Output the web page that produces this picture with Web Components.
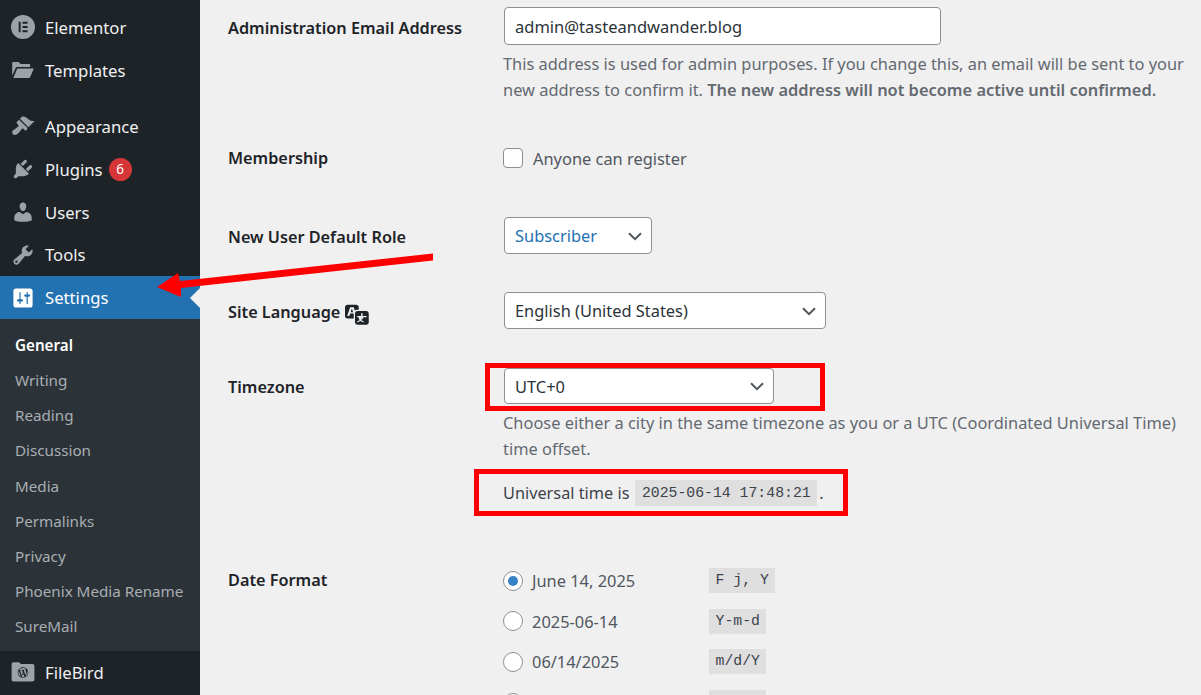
<!DOCTYPE html>
<html lang="en"><head><meta charset="utf-8"><title>General Settings</title>
<style>
html,body{margin:0;height:695px;overflow:hidden;background:#f0f0f1}
body{font-family:"Noto Sans","Liberation Sans",sans-serif;color:#1d2327}
wp-row.r2{margin-top:42px}
wp-row.r3{margin-top:46px}
wp-row.r4{margin-top:38px}
wp-row.r5{margin-top:39px}
wp-row.r6{margin-top:62px}
wp-sep{height:13.500px}
.strong{font-weight:600}
</style></head>
<body>
<wp-shell>
  <wp-sidebar slot="side">
    <wp-item icon="elementor">Elementor</wp-item>
    <wp-item icon="folder">Templates</wp-item>
    <wp-sep></wp-sep>
    <wp-item icon="appearance">Appearance</wp-item>
    <wp-item icon="plugins" badge="6">Plugins</wp-item>
    <wp-item icon="users">Users</wp-item>
    <wp-item icon="tools">Tools</wp-item>
    <wp-item icon="settings" current>Settings</wp-item>
    <wp-submenu>
      <wp-subitem current>General</wp-subitem>
      <wp-subitem>Writing</wp-subitem>
      <wp-subitem>Reading</wp-subitem>
      <wp-subitem>Discussion</wp-subitem>
      <wp-subitem>Media</wp-subitem>
      <wp-subitem>Permalinks</wp-subitem>
      <wp-subitem>Privacy</wp-subitem>
      <wp-subitem>Phoenix Media Rename</wp-subitem>
      <wp-subitem>SureMail</wp-subitem>
    </wp-submenu>
    <wp-item icon="filebird">FileBird</wp-item>
  </wp-sidebar>

  <wp-row label="Administration Email Address" lh="41">
    <wp-input>admin@tasteandwander.blog</wp-input>
    <wp-help>This address is used for admin purposes. If you change this, an email will be sent to your<br>new address to confirm it. <span class="strong">The new address will not become active until confirmed.</span></wp-help>
  </wp-row>
  <wp-row class="r2" label="Membership" lh="25">
    <wp-check>Anyone can register</wp-check>
  </wp-row>
  <wp-row class="r3" label="New User Default Role" lh="40">
    <wp-select w="148" h="37" color="#2271b1">Subscriber</wp-select>
  </wp-row>
  <wp-row class="r4" label="Site Language" lh="40" translate-icon>
    <wp-select w="322" h="37">English (United States)</wp-select>
  </wp-row>
  <wp-row class="r5" label="Timezone" lh="38">
    <wp-select w="270" h="36">UTC+0</wp-select>
    <wp-help>Choose either a city in the same timezone as you or a UTC (Coordinated Universal Time)<br>time offset.</wp-help>
    <wp-time>2025-06-14 17:48:21</wp-time>
  </wp-row>
  <wp-row class="r6" label="Date Format" lh="24">
    <wp-radio checked format="F j, Y">June 14, 2025</wp-radio>
    <wp-radio format="Y-m-d">2025-06-14</wp-radio>
    <wp-radio format="m/d/Y">06/14/2025</wp-radio>
    <wp-radio format=""></wp-radio>
  </wp-row>
  <wp-annotations slot="over"></wp-annotations>
</wp-shell>

<script>
const ICONS={
elementor:'<path fill-rule="evenodd" d="M10 0a10 10 0 1 0 0 20 10 10 0 0 0 0-20zM6.400 5.600h1.600v8.800H6.400zm3.200 0h4.200v1.600H9.600zm0 3.600h4.200v1.600H9.600zm0 3.600h4.200v1.600H9.600z"/>',
folder:'<path d="M1 4.400c0-.6.4-1 1-1h4.400l1.600 1.700h7c.6 0 1 .4 1 1v1.300H5.200c-.6 0-1 .3-1.200.8L1 14.800z"/><path d="M5.200 8.800h13.900L15.900 16c-.2.400-.5.600-.9.600H1.900z"/>',
appearance:'<path d="M14.480 11.060L7.410 3.990l1.500-1.500c.5-.56 2.300-.47 3.510.32 1.210.8 1.430 1.280 2.910 2.100 1.180.64 2.450 1.260 4.450.85zm-.71.71L6.700 4.700 4.930 6.470c-.39.39-.39 1.020 0 1.410l1.060 1.060c.39.39.39 1.030 0 1.420-.6.6-1.430 1.110-2.210 1.690-.35.26-.7.53-1.010.84C1.430 13.230 1 14.230 1 15.400c0 .53.2 1.030.58 1.410l.01.010c.38.38.88.58 1.410.58 1.170 0 2.170-.43 3.510-1.770.31-.31.58-.66.84-1.010.58-.78 1.090-1.610 1.690-2.210.39-.39 1.030-.39 1.420 0l1.060 1.060c.39.39 1.020.39 1.410 0z"/>',
plugins:'<path d="M13.110 4.360L9.870 7.600 8 5.730l3.240-3.240c.35-.34 1.050-.2 1.560.32.52.51.66 1.210.31 1.550zm-8 1.770l.91-1.120 9.010 9.010-1.190.84c-.71.71-2.630 1.160-3.820 1.160H6.140L4.900 17.260c-.59.59-1.540.59-2.120 0-.59-.58-.59-1.530 0-2.120l1.240-1.240v-3.880c0-1.130.4-3.190 1.090-3.890zm7.260 3.970l3.240-3.240c.34-.35 1.040-.21 1.550.31.52.51.66 1.210.31 1.550l-3.240 3.250z"/>',
users:'<path d="M10 9.250c-2.270 0-2.730-3.440-2.730-3.440C7 4.020 7.820 2 9.970 2c2.160 0 2.980 2.020 2.710 3.810 0 0-.41 3.440-2.680 3.440zm0 2.570L12.720 10c2.390 0 4.520 2.330 4.520 4.530v2.490s-3.650 1.130-7.240 1.130c-3.650 0-7.240-1.130-7.240-1.130v-2.490c0-2.250 1.940-4.480 4.470-4.480z"/>',
tools:'<path d="M16.680 9.770c-1.340 1.340-3.300 1.670-4.950.99l-5.410 6.520c-.99.99-2.590.99-3.580 0s-.99-2.590 0-3.570l6.520-5.420c-.68-1.650-.35-3.610.99-4.950 1.280-1.280 3.120-1.620 4.720-1.060l-2.890 2.890 2.820 2.820 2.860-2.870c.53 1.580.18 3.390-1.080 4.650zM3.810 16.210c.4.39 1.040.39 1.430 0 .4-.4.4-1.040 0-1.430-.39-.4-1.030-.4-1.430 0-.39.39-.39 1.030 0 1.430z"/>',
settings:'<path d="M18 16V4c0-1.100-.9-2-2-2H4c-1.100 0-2 .9-2 2v12c0 1.100.9 2 2 2h12c1.100 0 2-.9 2-2zM8 11h1c.55 0 1 .45 1 1s-.45 1-1 1H8v1.500c0 .28-.22.5-.5.5s-.5-.22-.5-.5V13H6c-.55 0-1-.45-1-1s.45-1 1-1h1V5.500c0-.28.22-.5.5-.5s.5.22.5.5V11zm5-2h-1c-.55 0-1-.45-1-1s.45-1 1-1h1V5.500c0-.28.22-.5.5-.5s.5.22.5.5V7h1c.55 0 1 .45 1 1s-.45 1-1 1h-1v5.500c0 .28-.22.5-.5.5s-.5-.22-.5-.5V9z"/>',
filebird:'<path d="M.5 3.500c0-1 .6-1.600 1.600-1.600h4.600l1.600 1.500h9.600c1 0 1.600.6 1.600 1.600v11.300c0 1-.6 1.600-1.600 1.600H2.100c-1 0-1.600-.6-1.600-1.600z"/><g transform="translate(5.600 6.100) scale(.44)" style="fill:#1d2327"><path d="M20 10c0-5.510-4.490-10-10-10C4.480 0 0 4.490 0 10c0 5.520 4.480 10 10 10 5.510 0 10-4.480 10-10zM7.780 15.370L4.370 6.220c.55-.02 1.170-.08 1.170-.08.5-.06.44-1.130-.06-1.110 0 0-1.450.11-2.370.11-.18 0-.37 0-.58-.01C4.120 2.690 6.870 1.110 10 1.110c2.330 0 4.450.87 6.050 2.340-.68-.11-1.650.39-1.650 1.580 0 .74.45 1.360.9 2.100.35.61.55 1.360.55 2.460 0 1.490-1.400 5-1.400 5l-3.030-8.370c.54-.02.82-.17.82-.17.5-.05.44-1.250-.06-1.220 0 0-1.440.12-2.380.12-.87 0-2.330-.12-2.330-.12-.5-.03-.56 1.200-.06 1.220l.92.08 1.260 3.410zM17.410 10c.24-.64.74-1.870.43-4.250.7 1.290 1.050 2.710 1.050 4.250 0 3.290-1.730 6.240-4.400 7.780.97-2.590 1.940-5.200 2.920-7.780zM6.100 18.090C3.120 16.650 1.110 13.530 1.110 10c0-1.300.23-2.480.72-3.590C3.250 10.300 4.670 14.200 6.100 18.090zm4.030-6.630l2.580 6.980c-.86.29-1.760.45-2.710.45-.79 0-1.570-.11-2.290-.33.81-2.380 1.620-4.740 2.420-7.100z"/></g>'
};
const CHEVRON='<svg viewBox="0 0 16 16" width="16" height="16" fill="none" stroke="#50575e" stroke-width="2"><path d="M2 5.200l6 6 6-6"/></svg>';
function def(name,css,html,init){
  customElements.define(name,class extends HTMLElement{
    connectedCallback(){
      if(this.shadowRoot)return;
      const s=this.attachShadow({mode:'open'});
      s.innerHTML='<style>'+css+'</style>'+(typeof html==='function'?html(this):html);
      if(init)init(this,s);
    }
  });
}
def('wp-shell',`:host{display:grid;grid-template-columns:200px 1fr;height:695px;position:relative;overflow:hidden}
 main{padding:7px 0 0 28px;display:flex;flex-direction:column;min-width:0}`,
 `<slot name="side"></slot><main><slot></slot></main><slot name="over"></slot>`);
def('wp-sidebar',`:host{display:flex;flex-direction:column;background:#1d2327;padding-top:6px;height:695px;box-sizing:border-box}`,`<slot></slot>`);
def('wp-sep',`:host{display:block}`,``);
def('wp-item',`:host{display:flex;align-items:center;height:42.800px;flex:none;position:relative;color:#f0f0f1;font-size:16.700px}
 :host([current]){background:#2271b1;color:#fff}
 svg{width:24px;height:24px;margin-left:10.500px;margin-right:10.500px;fill:#9da2a7;flex:none}
 :host([current]) svg{fill:#fff}
 .badge{margin-left:6px;width:23px;height:23px;border-radius:50%;background:#d63638;color:#fff;font-size:13.500px;display:flex;align-items:center;justify-content:center}
 .tip{position:absolute;right:0;top:50%;margin-top:-10px;border:10px solid transparent;border-left:0;border-right-color:#f0f0f1}`,
 h=>`<svg viewBox="0 0 20 20">${ICONS[h.getAttribute('icon')]}</svg><span><slot></slot></span>`+
   (h.hasAttribute('badge')?`<span class="badge">${h.getAttribute('badge')}</span>`:'')+
   (h.hasAttribute('current')?`<span class="tip"></span>`:''));
def('wp-submenu',`:host{display:flex;flex-direction:column;background:#2c3338;padding:8.800px 0 6.200px;flex:none}`,`<slot></slot>`);
def('wp-subitem',`:host{display:block;padding-left:15px;height:35.200px;line-height:35.200px;color:#a9aeb3;font-size:15.200px;white-space:nowrap}
 :host([current]){color:#fff;font-weight:600}`,`<slot></slot>`);
def('wp-row',`:host{display:grid;grid-template-columns:276px 1fr;flex:none}
 .l{font-size:16.250px;font-weight:600;color:#1d2327;display:flex;align-items:center;gap:4.500px;align-self:start;white-space:nowrap;margin-bottom:-20px}
 .f{display:flex;flex-direction:column;align-items:flex-start;min-width:0}
 svg{width:25px;height:25px;fill:#1d2327;flex:none;margin-top:3px}`,
 h=>`<div class="l" style="height:${h.getAttribute('lh')}px">${h.getAttribute('label')}${h.hasAttribute('translate-icon')?'<svg viewBox="0 0 20 20"><path d="M11 7H9.490c-.63 0-1.250.3-1.590.7L7 5H4.130l-2.390 7h1.690l.74-2H7v4H2c-1.100 0-2-.9-2-2V5c0-1.100.9-2 2-2h7c1.100 0 2 .9 2 2v2zM6.510 9H4.490l1-2.930zM10 8h7c1.100 0 2 .9 2 2v7c0 1.100-.9 2-2 2h-7c-1.100 0-2-.9-2-2v-7c0-1.100.9-2 2-2zm7.250 5v-1.080h-3.170V9.750h-1.160v2.170H9.750V13h1.170c.11.95.37 1.790.8 2.480-.5.33-1.150.59-1.970.78v1c1.030-.27 1.900-.66 2.580-1.190.69.53 1.550.92 2.600 1.190v-1c-.83-.19-1.480-.45-1.980-.78.42-.69.69-1.530.8-2.480h1.500zm-2.660 0c-.08.71-.28 1.280-.59 1.720-.31-.44-.51-1.010-.59-1.720z" fill-rule="evenodd"/></svg>':''}</div><div class="f"><slot></slot></div>`);
def('wp-input',`:host{display:flex;align-items:center;box-sizing:border-box;width:437px;height:38px;background:#fff;border:1px solid #8c8f94;border-radius:4px;padding:0 10px;font-size:16.500px;color:#2c3338}`,`<slot></slot>`);
def('wp-select',`:host{display:flex;align-items:center;justify-content:space-between;box-sizing:border-box;background:#fff;border:1px solid #8c8f94;border-radius:4px;padding:0 8px 0 10px;font-size:16.400px;color:#2c3338}
 :host svg{flex:none}`,h=>`<span><slot></slot></span>${CHEVRON}`,
 (h,s)=>{h.style.width=h.getAttribute('w')+'px';h.style.height=h.getAttribute('h')+'px';if(h.getAttribute('color'))h.style.color=h.getAttribute('color');});
def('wp-help',`:host{display:block;margin:6px 0 0 -1px;font-size:16.400px;line-height:26px;color:#646970;white-space:nowrap}`,`<slot></slot>`);
def('wp-check',`:host{display:flex;align-items:center;height:26px;font-size:16.400px;color:#50575e;white-space:nowrap;margin-left:-1px}
 i{width:20px;height:20px;box-sizing:border-box;background:#fff;border:1px solid #8c8f94;border-radius:4px;margin-right:10px;flex:none}`,`<i></i><slot></slot>`);
const CODE=`code{font-family:"Liberation Mono",monospace;font-size:14.800px;background:#dfdfe0;color:#3c434a;padding:0 6.500px;height:26px;line-height:26px;display:inline-block;box-sizing:border-box;white-space:pre;min-width:57px}`;
def('wp-time',`:host{display:flex;align-items:center;height:26px;margin:18px 0 0 -1px;font-size:16.300px;color:#3c434a;white-space:pre}${CODE} .s{margin-right:6px}.d{margin-left:2px}`,
 `<span class="s">Universal time is</span><code><slot></slot></code><span class="d">.</span>`);
def('wp-radio',`:host{display:flex;align-items:center;height:25px;margin:0 0 15.700px -1px;font-size:16.400px;color:#50575e;white-space:nowrap}
 i{width:20px;height:20px;box-sizing:border-box;background:#fff;border:1px solid #8c8f94;border-radius:50%;margin-right:9px;flex:none;display:flex;align-items:center;justify-content:center}
 :host([checked]) i::after{content:"";width:10px;height:10px;border-radius:50%;background:#3582c4}
 .t{width:177px;flex:none}
 ${CODE} code{height:25px;line-height:25px}`,
 h=>`<i></i><span class="t"><slot></slot></span><code>${h.getAttribute('format')}</code>`);
def('wp-annotations',`:host{position:absolute;inset:0;pointer-events:none;display:block}
 .b{position:absolute;box-sizing:border-box;border:5px solid #f00}
 svg{position:absolute;left:0;top:0;width:1201px;height:695px}`,
 `<svg viewBox="0 0 1201 695"><polygon fill="#f00" points="433,253.500 433,260.500 181,288 181,297 157,287 178,273 180,281"/></svg>
  <div class="b" style="left:485px;top:363px;width:340px;height:48px"></div>
  <div class="b" style="left:474px;top:469px;width:374px;height:47px"></div>`);
</script>
</body></html>
